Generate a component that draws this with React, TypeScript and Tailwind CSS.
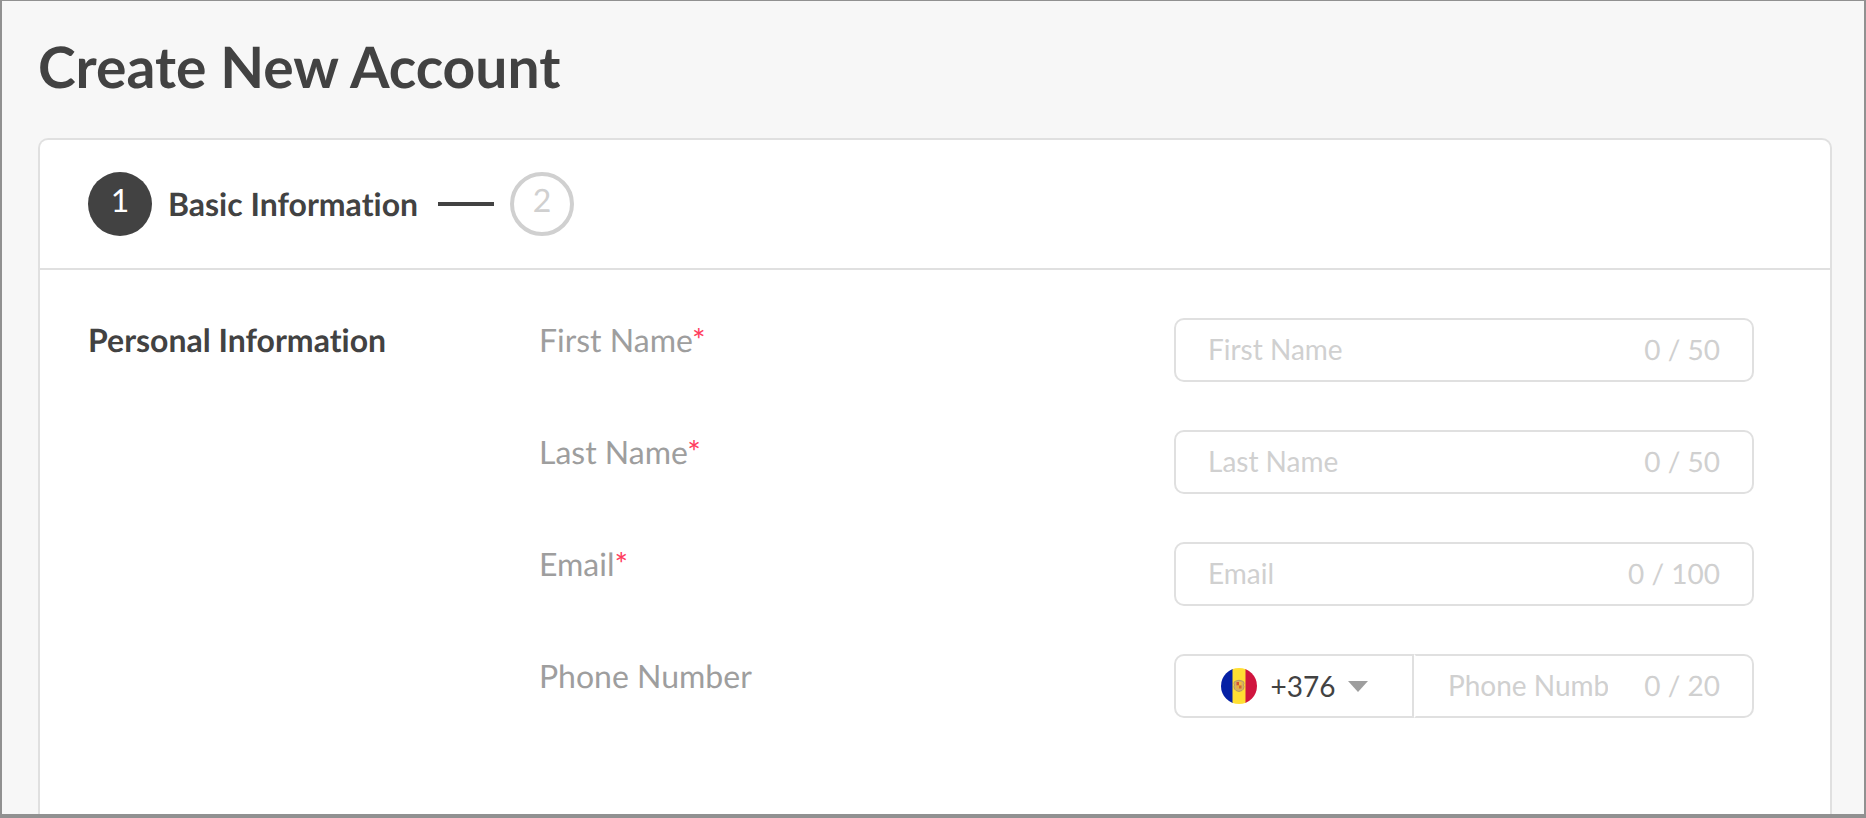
import React, { useState } from 'react';

interface Field {
  id: string;
  label: string;
  type: string;
  max: number;
  required: boolean;
}

const FIELDS: Field[] = [
  { id: 'firstName', label: 'First Name', type: 'text', max: 50, required: true },
  { id: 'lastName', label: 'Last Name', type: 'text', max: 50, required: true },
  { id: 'email', label: 'Email', type: 'text', max: 100, required: true },
  { id: 'phone', label: 'Phone Number', type: 'tel', max: 20, required: false },
];

function AndorraFlag() {
  return (
    <svg viewBox="0 0 72 72" className="h-9 w-9 shrink-0" aria-hidden="true">
      <defs>
        <clipPath id="flag-circle">
          <circle cx="36" cy="36" r="36" />
        </clipPath>
      </defs>
      <g clipPath="url(#flag-circle)">
        <rect width="24" height="72" fill="#0520a5" />
        <rect x="23" width="27" height="72" fill="#ffdf33" />
        <rect x="49" width="23" height="72" fill="#d0153e" />
        <path
          d="M30 26q6-3 12 0q4 0 4 5q-2 3 0 6q0 6-4 8q-6 4-12 0q-4-2-4-8q2-3 0-6q0-5 4-5z"
          fill="#d9b060"
          stroke="#b39a62"
          strokeWidth="2"
        />
        <rect x="31" y="28" width="5" height="7" fill="#d5552f" />
        <rect x="36" y="28" width="5" height="7" fill="#f0c23a" />
        <rect x="31" y="35" width="5" height="6" fill="#e8b23a" />
        <rect x="36" y="35" width="5" height="6" fill="#d5662f" />
      </g>
    </svg>
  );
}

function CountryCode() {
  return (
    <div className="flex w-60 shrink-0 items-center justify-center rounded-l-[10px] border-2 border-[#e0e0e0]">
      <AndorraFlag />
      <select
        aria-label="Country code"
        className="ml-3.5 appearance-none bg-transparent text-[28px] text-[#424242] outline-none"
      >
        <option>+376</option>
      </select>
      <svg viewBox="0 0 20 11" className="ml-3 h-[11px] w-5 shrink-0" aria-hidden="true">
        <path d="M0 0h20L10 11z" fill="#9e9e9e" />
      </svg>
    </div>
  );
}

function FieldRow({ field }: { field: Field }) {
  const [value, setValue] = useState('');
  const isPhone = field.id === 'phone';

  return (
    <div className="flex justify-between gap-8">
      <label htmlFor={field.id} className="text-[32px] leading-[44px] text-[#9e9e9e]">
        {field.label}
        {field.required && <span className="text-[#ff3d5e]">*</span>}
      </label>
      <div className="flex h-16 w-[580px]">
        {isPhone && <CountryCode />}
        <div
          className={
            isPhone
              ? 'flex min-w-0 flex-1 items-center gap-9 rounded-r-[10px] border-2 border-l-transparent border-[#e0e0e0] px-8 pb-0.5'
              : 'flex min-w-0 flex-1 items-center gap-9 rounded-[10px] border-2 border-[#e0e0e0] px-8 pb-0.5'
          }
        >
          <input
            id={field.id}
            type={field.type}
            placeholder={field.label}
            maxLength={field.max}
            value={value}
            onChange={(e) => setValue(e.target.value)}
            className="min-w-0 flex-1 bg-transparent text-[28px] text-[#424242] outline-none placeholder:text-[#d0d0d0]"
          />
          <span className="shrink-0 text-[28px] text-[#d0d0d0]">
            {`${value.length} / ${field.max}`}
          </span>
        </div>
      </div>
    </div>
  );
}

export default function App() {
  return (
    <div className="flex min-h-screen flex-col border-x-2 border-t border-b-4 border-[#919191] bg-[#f7f7f7] pt-8 pr-8 pl-9 font-[Lato,sans-serif] text-[#424242] [font-variant-ligatures:none] [text-rendering:geometricPrecision]">
      <h1 className="mb-9 text-[57px] leading-[69px] font-bold">Create New Account</h1>
      <main className="flex-1 rounded-t-[10px] border-2 border-b-0 border-[#e0e0e0] bg-white">
        <ol className="flex items-center gap-4 border-b-2 border-[#e0e0e0] px-12 py-8 text-[32px]">
          <li className="flex items-center gap-4 font-bold">
            <span className="flex h-16 w-16 items-center justify-center rounded-full bg-[#424242] pb-2 font-normal text-white">
              1
            </span>
            <span className="min-w-[254px]">Basic Information</span>
          </li>
          <li className="h-1 w-14 bg-[#424242]" aria-hidden="true" />
          <li className="flex h-16 w-16 items-center justify-center rounded-full border-4 border-[#d0d0d0] pb-2 text-[#d0d0d0]">
            2
          </li>
        </ol>
        <form className="flex py-12 pr-[76px] pl-12">
          <h2 className="w-[451px] shrink-0 text-[32px] leading-[44px] font-bold">
            Personal Information
          </h2>
          <div className="flex flex-1 flex-col gap-12">
            {FIELDS.map((field) => (
              <FieldRow key={field.id} field={field} />
            ))}
          </div>
        </form>
      </main>
    </div>
  );
}
